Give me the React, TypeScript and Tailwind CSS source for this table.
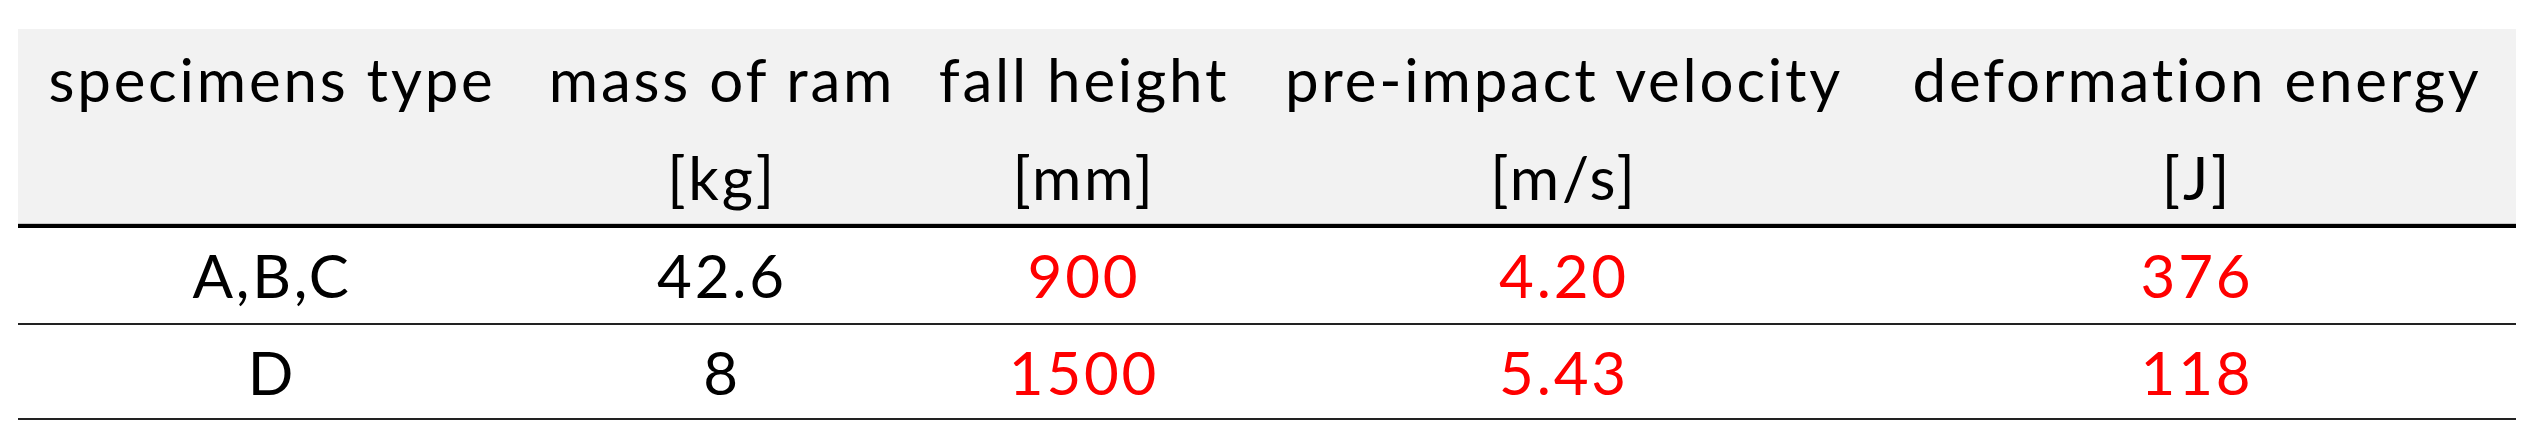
const columns = [
  { title: 'specimens type', unit: '' },
  { title: 'mass of ram', unit: '[kg]' },
  { title: 'fall height', unit: '[mm]' },
  { title: 'pre-impact velocity', unit: '[m/s]' },
  { title: 'deformation energy', unit: '[J]' },
];

const rows = [
  ['A,B,C', '42.6', '900', '4.20', '376'],
  ['D', '8', '1500', '5.43', '118'],
];

// first two columns are given, the rest are computed
const isRed = (col: number) => col >= 2;

export default function App() {
  return (
    <div className="w-[2545px] h-[441px] bg-white pt-[29px] pl-[18px] font-['Lato',sans-serif] text-[60px] tracking-[2.8px] text-black">
      <div className="w-[2498px]">
        <div className="grid grid-cols-[508px_392px_332px_628px_638px] h-[199px] bg-[#f2f2f2] border-b-[4px] border-black pt-[1px] leading-[98px] shadow-[inset_0_-1px_0_#c8c8c8]">
          {columns.map((c) => (
            <div key={c.title} className="flex flex-col items-center whitespace-nowrap">
              <span>{c.title}</span>
              <span>{c.unit || '\u00a0'}</span>
            </div>
          ))}
        </div>
        {rows.map((r, i) => (
          <div
            key={i}
            className={`grid grid-cols-[508px_392px_332px_628px_638px] border-b-2 border-[#222] leading-[95px] ${
              i === 0 ? 'h-[97px]' : 'h-[95px]'
            }`}
          >
            {r.map((v, j) => (
              <div key={j} className={`text-center ${isRed(j) ? 'text-[#ff0000]' : ''}`}>
                {v}
              </div>
            ))}
          </div>
        ))}
      </div>
    </div>
  );
}
